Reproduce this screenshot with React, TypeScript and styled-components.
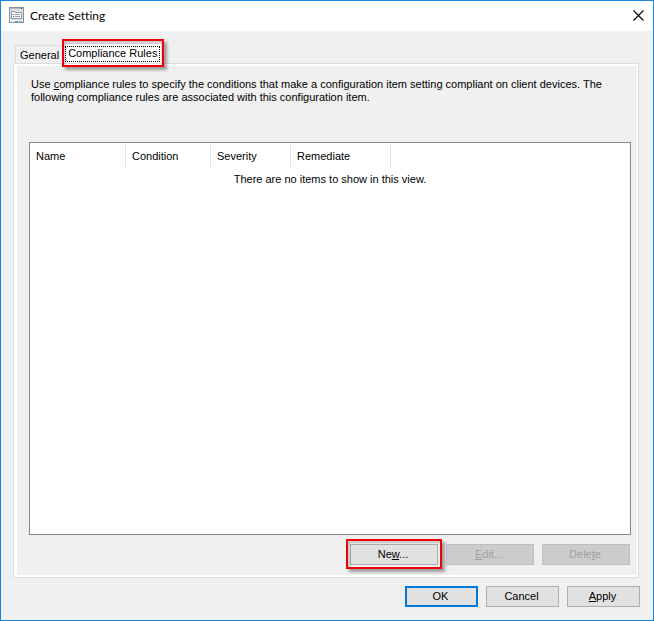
import React from "react";
import styled, { createGlobalStyle, css } from "styled-components";

const GlobalStyle = createGlobalStyle`
  * { box-sizing: border-box; }
  html, body, #root { height: 100%; }
  body {
    margin: 0;
    font-family: "Liberation Sans", Arial, sans-serif;
    font-size: 11px;
    line-height: 13px;
    color: #000;
  }
`;

const Dialog = styled.main`
  display: flex;
  flex-direction: column;
  min-height: 100%;
  border: 1px solid #1883d7;
  background: #f0f0f0;
`;

const TitleBar = styled.header`
  display: flex;
  align-items: center;
  height: 30px;
  padding: 0 9px 2px 8px;
  background: #fff;
`;

const Title = styled.h1`
  flex: 1;
  margin: 0 0 0 6px;
  padding-top: 2px;
  font-family: Lato, "Segoe UI", sans-serif;
  font-size: 12px;
  font-weight: 400;
  font-variant-ligatures: none;
  line-height: 16px;
`;

const CloseButton = styled.button`
  display: flex;
  padding: 0;
  border: 0;
  background: none;
`;

const Body = styled.div`
  flex: 1;
  display: flex;
  flex-direction: column;
  padding: 12px 13px 13px 12px;
`;

const Tabs = styled.div`
  display: flex;
  align-items: flex-end;
  height: 20px;
  padding-left: 2px;
`;

const Tab = styled.button<{ $active?: boolean }>`
  position: relative;
  font: inherit;
  color: inherit;
  height: 18px;
  padding: 1px 3px 0 4px;
  border: 1px solid #dcdcdc;
  border-bottom: 0;
  background: #f0f0f0;
  white-space: nowrap;
  outline: none;
  ${(p) =>
    p.$active &&
    css`
      z-index: 1;
      height: 20px;
      padding: 1px;
      background: #fff;
    `}
`;

const FocusFrame = styled.span`
  display: block;
  height: 16px;
  padding: 0 2px;
  border: 1px dotted #000;
`;

const Highlight = styled.span<{ $inset: string }>`
  position: absolute;
  inset: ${(p) => p.$inset};
  border: 2px solid #f00008;
  box-shadow: 3px 3px 3px rgba(0, 0, 0, 0.35), inset 2px 2px 2px rgba(0, 0, 0, 0.18);
  pointer-events: none;
`;

const Panel = styled.section`
  flex: 1;
  display: flex;
  flex-direction: column;
  margin-right: 1px;
  padding: 12px 7px 12px 15px;
  border: 1px solid #dcdcdc;
  box-shadow: inset 3px 2px #fff, inset -1px -2px #fff;
`;

const Description = styled.p`
  margin: 2px 20px 0 2px;
  min-height: 64px;
`;

const ListView = styled.div`
  flex: 1;
  padding-top: 1px;
  border: 1px solid #828790;
  background: #fff;
`;

const Table = styled.table`
  width: 100%;
  table-layout: fixed;
  border-collapse: separate;
  border-spacing: 0;
`;

const HeadCell = styled.th<{ $width?: number }>`
  width: ${(p) => (p.$width ? `${p.$width}px` : "auto")};
  height: 24px;
  padding: 0 6px;
  border-right: ${(p) => (p.$width ? "1px solid #e5e5e5" : "0")};
  font-weight: 400;
  text-align: left;
`;

const EmptyCell = styled.td`
  height: 23px;
  padding: 0;
  text-align: center;
`;

const ButtonRow = styled.div`
  display: flex;
  justify-content: flex-end;
  gap: 8px;
`;

const RuleActions = styled(ButtonRow)`
  margin: 9px 1px 0 0;
`;

const DialogActions = styled(ButtonRow)`
  margin-top: 8px;
`;

const Button = styled.button<{ $width: number; $primary?: boolean }>`
  position: relative;
  width: ${(p) => p.$width}px;
  height: 21px;
  padding: 0 2px 0 0;
  border: ${(p) => (p.$primary ? "2px solid #0078d7" : "1px solid #adadad")};
  background: #e1e1e1;
  color: #000;
  font: inherit;

  &:disabled {
    border-color: #bfbfbf;
    background: #ccc;
    color: #a0a0a0;
  }
`;

const Key = styled.u`
  text-underline-offset: 1px;
`;

const SettingIcon = () => (
  <svg width="15" height="16" viewBox="0 0 15 16" shapeRendering="crispEdges" aria-hidden="true">
    <path d="M0 0h15v16H0z" fill="#8b8f98" />
    <path d="M1 1h13v14H1z" fill="#dfe2e5" />
    <path d="M1 1h13v1H1z" fill="#b4b9c2" />
    <path d="M12 1h1v1h-1z" fill="#34445c" />
    <path d="M2 4h4v1h7v7H2z" fill="#f8fafb" />
    <path d="M2 4h4v1H2zM2 5h1v7H2zM6 5h7v1H6zM12 6h1v6h-1zM3 11h9v1H3z" fill="#9499a4" />
    <path d="M4 7h1v1H4zM4 9h1v1H4z" fill="#4a6389" />
    <path d="M6 7h5v1H6zM6 9h5v1H6z" fill="#9ba0a9" />
    <path d="M1 13h13v2H1z" fill="#eef0f1" />
    <path d="M6 14h3v1H6z" fill="#22bfe8" />
    <path d="M10 14h3v1h-3z" fill="#a8afb8" />
  </svg>
);

const CloseIcon = () => (
  <svg width="11" height="12" viewBox="0 -1 11 12" aria-hidden="true">
    <path d="M0.5 0.5l10 10M10.5 0.5l-10 10" stroke="#000" strokeWidth="1.1" />
  </svg>
);

const columns = [
  { label: "Name", width: 96 },
  { label: "Condition", width: 85 },
  { label: "Severity", width: 80 },
  { label: "Remediate", width: 100 },
];

export default function App() {
  return (
    <>
      <GlobalStyle />
      <Dialog role="dialog" aria-labelledby="dialog-title">
        <TitleBar>
          <SettingIcon />
          <Title id="dialog-title">Create Setting</Title>
          <CloseButton type="button" aria-label="Close">
            <CloseIcon />
          </CloseButton>
        </TitleBar>
        <Body>
          <Tabs role="tablist">
            <Tab type="button" role="tab" aria-selected={false}>
              General
            </Tab>
            <Tab type="button" role="tab" aria-selected={true} aria-controls="rules-panel" id="rules-tab" $active>
              <FocusFrame>Compliance Rules</FocusFrame>
              <Highlight $inset="-5px -3px -4px -2px" />
            </Tab>
          </Tabs>
          <Panel role="tabpanel" id="rules-panel" aria-labelledby="rules-tab">
            <Description>
              Use <Key>c</Key>ompliance rules to specify the conditions that make a configuration item setting
              compliant on client devices. The following compliance rules are associated with this configuration item.
            </Description>
            <ListView>
              <Table aria-label="Compliance rules">
                <thead>
                  <tr>
                    {columns.map((c) => (
                      <HeadCell key={c.label} $width={c.width} scope="col">
                        {c.label}
                      </HeadCell>
                    ))}
                    <HeadCell as="td" />
                  </tr>
                </thead>
                <tbody>
                  <tr>
                    <EmptyCell colSpan={5}>There are no items to show in this view.</EmptyCell>
                  </tr>
                </tbody>
              </Table>
            </ListView>
            <RuleActions>
              <Button type="button" $width={88}>
                Ne<Key>w</Key>...
                <Highlight $inset="-6px -5px -5px" />
              </Button>
              <Button type="button" $width={88} disabled>
                <Key>E</Key>dit...
              </Button>
              <Button type="button" $width={88} disabled>
                Dele<Key>t</Key>e
              </Button>
            </RuleActions>
          </Panel>
          <DialogActions>
            <Button type="button" $width={73} $primary>
              OK
            </Button>
            <Button type="button" $width={73}>
              Cancel
            </Button>
            <Button type="button" $width={73}>
              <Key>A</Key>pply
            </Button>
          </DialogActions>
        </Body>
      </Dialog>
    </>
  );
}
